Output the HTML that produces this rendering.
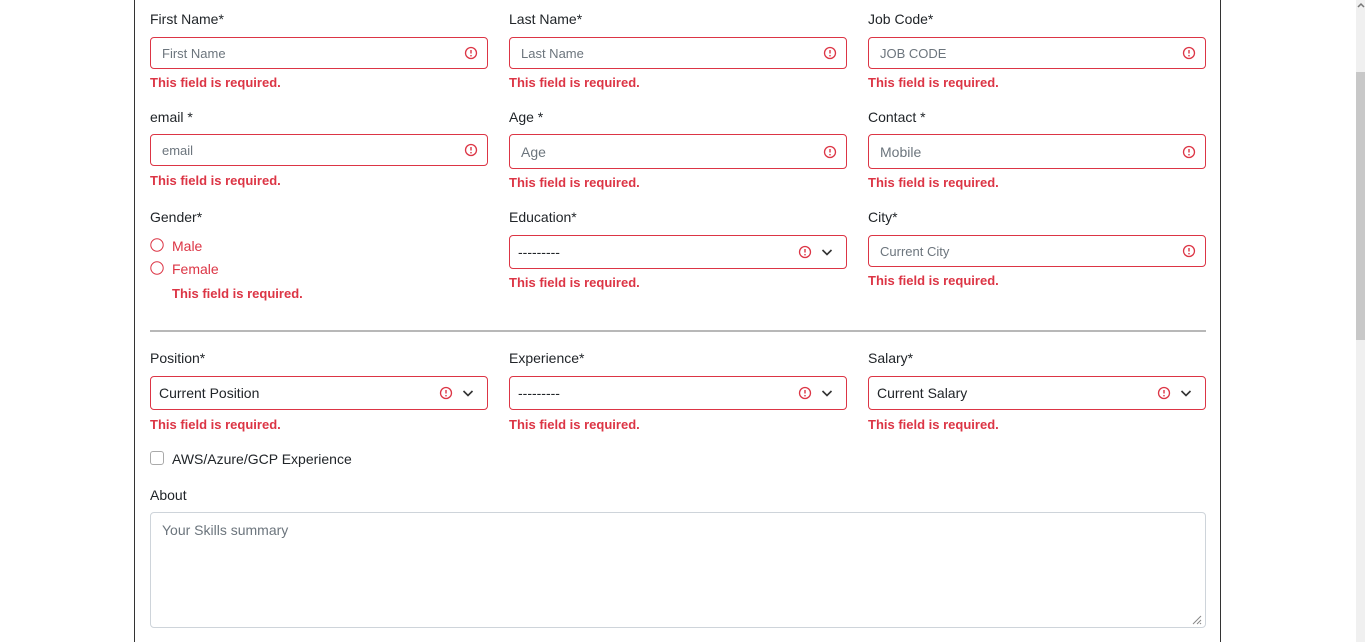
<!DOCTYPE html>
<html><head><meta charset="utf-8"><style>
*{box-sizing:border-box;margin:0;padding:0}
html,body{width:1365px;height:642px;overflow:hidden}
body{background:#fff;font-family:"Liberation Sans",sans-serif;color:#212529;position:relative}
.frame{position:absolute;left:134px;top:0;width:1087px;height:642px;border-left:1px solid #333;border-right:1px solid #333}
.a{position:absolute}
.lbl{font-size:14px;color:#212529}
.inp{position:absolute;border:1px solid #dc3545;border-radius:4px;background:#fff;font-size:13px;color:#6c757d;padding-left:11px;display:flex;align-items:center}
.sel{color:#212529;font-size:14px;padding-left:8px}
.err{position:absolute;font-size:13px;font-weight:bold;color:#dc3545}
.ic{position:absolute;top:50%;margin-top:-7px}
.chev{position:absolute;top:50%;margin-top:-5px}
.scroll{position:absolute;left:1356px;top:0;width:9px;height:642px;background:#f0f0f0}
.thumb{position:absolute;left:1356px;top:72px;width:9px;height:268px;background:#c8c8c8}
</style></head><body>
<div class="frame"></div>
<div class="scroll"></div><div class="thumb"></div>
<svg class="a" style="left:1357px;top:2px" width="8" height="6"><path d="M1 5L4 2L7 5" stroke="#777" stroke-width="1.5" fill="none"/></svg>

<div class="a lbl" style="left:150px;top:11px">First Name*</div>
<div class="a lbl" style="left:509px;top:11px">Last Name*</div>
<div class="a lbl" style="left:868px;top:11px">Job Code*</div>

<div class="inp" style="left:150px;top:37px;width:338px;height:32px">First Name<svg class="ic" style="right:9px" width="14" height="14"><circle cx="7" cy="7" r="5.5" fill="none" stroke="#dc3545" stroke-width="1.3"/><path d="M7 4v3.5" stroke="#dc3545" stroke-width="1.4"/><circle cx="7" cy="9.7" r=".8" fill="#dc3545"/></svg></div>
<div class="inp" style="left:509px;top:37px;width:338px;height:32px">Last Name<svg class="ic" style="right:9px" width="14" height="14"><circle cx="7" cy="7" r="5.5" fill="none" stroke="#dc3545" stroke-width="1.3"/><path d="M7 4v3.5" stroke="#dc3545" stroke-width="1.4"/><circle cx="7" cy="9.7" r=".8" fill="#dc3545"/></svg></div>
<div class="inp" style="left:868px;top:37px;width:338px;height:32px">JOB CODE<svg class="ic" style="right:9px" width="14" height="14"><circle cx="7" cy="7" r="5.5" fill="none" stroke="#dc3545" stroke-width="1.3"/><path d="M7 4v3.5" stroke="#dc3545" stroke-width="1.4"/><circle cx="7" cy="9.7" r=".8" fill="#dc3545"/></svg></div>
<div class="err" style="left:150px;top:75px">This field is required.</div>
<div class="err" style="left:509px;top:75px">This field is required.</div>
<div class="err" style="left:868px;top:75px">This field is required.</div>

<div class="a lbl" style="left:150px;top:109px">email *</div>
<div class="a lbl" style="left:509px;top:109px">Age *</div>
<div class="a lbl" style="left:868px;top:109px">Contact *</div>
<div class="inp" style="left:150px;top:134px;width:338px;height:32px">email<svg class="ic" style="right:9px" width="14" height="14"><circle cx="7" cy="7" r="5.5" fill="none" stroke="#dc3545" stroke-width="1.3"/><path d="M7 4v3.5" stroke="#dc3545" stroke-width="1.4"/><circle cx="7" cy="9.7" r=".8" fill="#dc3545"/></svg></div>
<div class="inp" style="left:509px;top:134px;width:338px;height:35px;font-size:14px">Age<svg class="ic" style="right:9px" width="14" height="14"><circle cx="7" cy="7" r="5.5" fill="none" stroke="#dc3545" stroke-width="1.3"/><path d="M7 4v3.5" stroke="#dc3545" stroke-width="1.4"/><circle cx="7" cy="9.7" r=".8" fill="#dc3545"/></svg></div>
<div class="inp" style="left:868px;top:134px;width:338px;height:35px;font-size:14px">Mobile<svg class="ic" style="right:9px" width="14" height="14"><circle cx="7" cy="7" r="5.5" fill="none" stroke="#dc3545" stroke-width="1.3"/><path d="M7 4v3.5" stroke="#dc3545" stroke-width="1.4"/><circle cx="7" cy="9.7" r=".8" fill="#dc3545"/></svg></div>
<div class="err" style="left:150px;top:173px">This field is required.</div>
<div class="err" style="left:509px;top:175px">This field is required.</div>
<div class="err" style="left:868px;top:175px">This field is required.</div>

<div class="a lbl" style="left:150px;top:209px">Gender*</div>
<div class="a lbl" style="left:509px;top:209px">Education*</div>
<div class="a lbl" style="left:868px;top:209px">City*</div>
<svg class="a" style="left:150px;top:238px" width="14" height="14"><circle cx="7" cy="7" r="6.2" fill="#fff" stroke="#dc3545" stroke-width="1"/></svg>
<div class="a" style="left:172px;top:238px;font-size:14px;color:#dc3545">Male</div>
<svg class="a" style="left:150px;top:261px" width="14" height="14"><circle cx="7" cy="7" r="6.2" fill="#fff" stroke="#dc3545" stroke-width="1"/></svg>
<div class="a" style="left:172px;top:261px;font-size:14px;color:#dc3545">Female</div>
<div class="err" style="left:172px;top:286px">This field is required.</div>
<div class="inp sel" style="left:509px;top:235px;width:338px;height:34px">---------<svg class="ic" style="right:34px" width="14" height="14"><circle cx="7" cy="7" r="5.5" fill="none" stroke="#dc3545" stroke-width="1.3"/><path d="M7 4v3.5" stroke="#dc3545" stroke-width="1.4"/><circle cx="7" cy="9.7" r=".8" fill="#dc3545"/></svg><svg class="chev" style="right:13px" width="12" height="10"><path d="M1.5 3l4.5 4.5L10.5 3" stroke="#333" stroke-width="1.6" fill="none"/></svg></div>
<div class="inp" style="left:868px;top:235px;width:338px;height:32px">Current City<svg class="ic" style="right:9px" width="14" height="14"><circle cx="7" cy="7" r="5.5" fill="none" stroke="#dc3545" stroke-width="1.3"/><path d="M7 4v3.5" stroke="#dc3545" stroke-width="1.4"/><circle cx="7" cy="9.7" r=".8" fill="#dc3545"/></svg></div>
<div class="err" style="left:509px;top:275px">This field is required.</div>
<div class="err" style="left:868px;top:273px">This field is required.</div>

<div class="a" style="left:150px;top:330px;width:1056px;height:2px;background:#b8b8b8"></div>

<div class="a lbl" style="left:150px;top:350px">Position*</div>
<div class="a lbl" style="left:509px;top:350px">Experience*</div>
<div class="a lbl" style="left:868px;top:350px">Salary*</div>
<div class="inp sel" style="left:150px;top:376px;width:338px;height:34px">Current Position<svg class="ic" style="right:34px" width="14" height="14"><circle cx="7" cy="7" r="5.5" fill="none" stroke="#dc3545" stroke-width="1.3"/><path d="M7 4v3.5" stroke="#dc3545" stroke-width="1.4"/><circle cx="7" cy="9.7" r=".8" fill="#dc3545"/></svg><svg class="chev" style="right:13px" width="12" height="10"><path d="M1.5 3l4.5 4.5L10.5 3" stroke="#333" stroke-width="1.6" fill="none"/></svg></div>
<div class="inp sel" style="left:509px;top:376px;width:338px;height:34px">---------<svg class="ic" style="right:34px" width="14" height="14"><circle cx="7" cy="7" r="5.5" fill="none" stroke="#dc3545" stroke-width="1.3"/><path d="M7 4v3.5" stroke="#dc3545" stroke-width="1.4"/><circle cx="7" cy="9.7" r=".8" fill="#dc3545"/></svg><svg class="chev" style="right:13px" width="12" height="10"><path d="M1.5 3l4.5 4.5L10.5 3" stroke="#333" stroke-width="1.6" fill="none"/></svg></div>
<div class="inp sel" style="left:868px;top:376px;width:338px;height:34px">Current Salary<svg class="ic" style="right:34px" width="14" height="14"><circle cx="7" cy="7" r="5.5" fill="none" stroke="#dc3545" stroke-width="1.3"/><path d="M7 4v3.5" stroke="#dc3545" stroke-width="1.4"/><circle cx="7" cy="9.7" r=".8" fill="#dc3545"/></svg><svg class="chev" style="right:13px" width="12" height="10"><path d="M1.5 3l4.5 4.5L10.5 3" stroke="#333" stroke-width="1.6" fill="none"/></svg></div>
<div class="err" style="left:150px;top:417px">This field is required.</div>
<div class="err" style="left:509px;top:417px">This field is required.</div>
<div class="err" style="left:868px;top:417px">This field is required.</div>

<div class="a" style="left:150px;top:451px;width:14px;height:14px;border:1px solid #aaa;border-radius:3px"></div>
<div class="a lbl" style="left:172px;top:451px">AWS/Azure/GCP Experience</div>
<div class="a lbl" style="left:150px;top:487px">About</div>
<div class="a" style="left:150px;top:512px;width:1056px;height:116px;border:1px solid #ced4da;border-radius:4px;font-size:14px;color:#6c757d;padding:9px 11px">Your Skills summary</div>
<svg class="a" style="left:1190px;top:613px" width="12" height="12"><path d="M11 3L3 11M11 7L7 11M11 10L10 11" stroke="#888" stroke-width="1"/></svg>
</body></html>
